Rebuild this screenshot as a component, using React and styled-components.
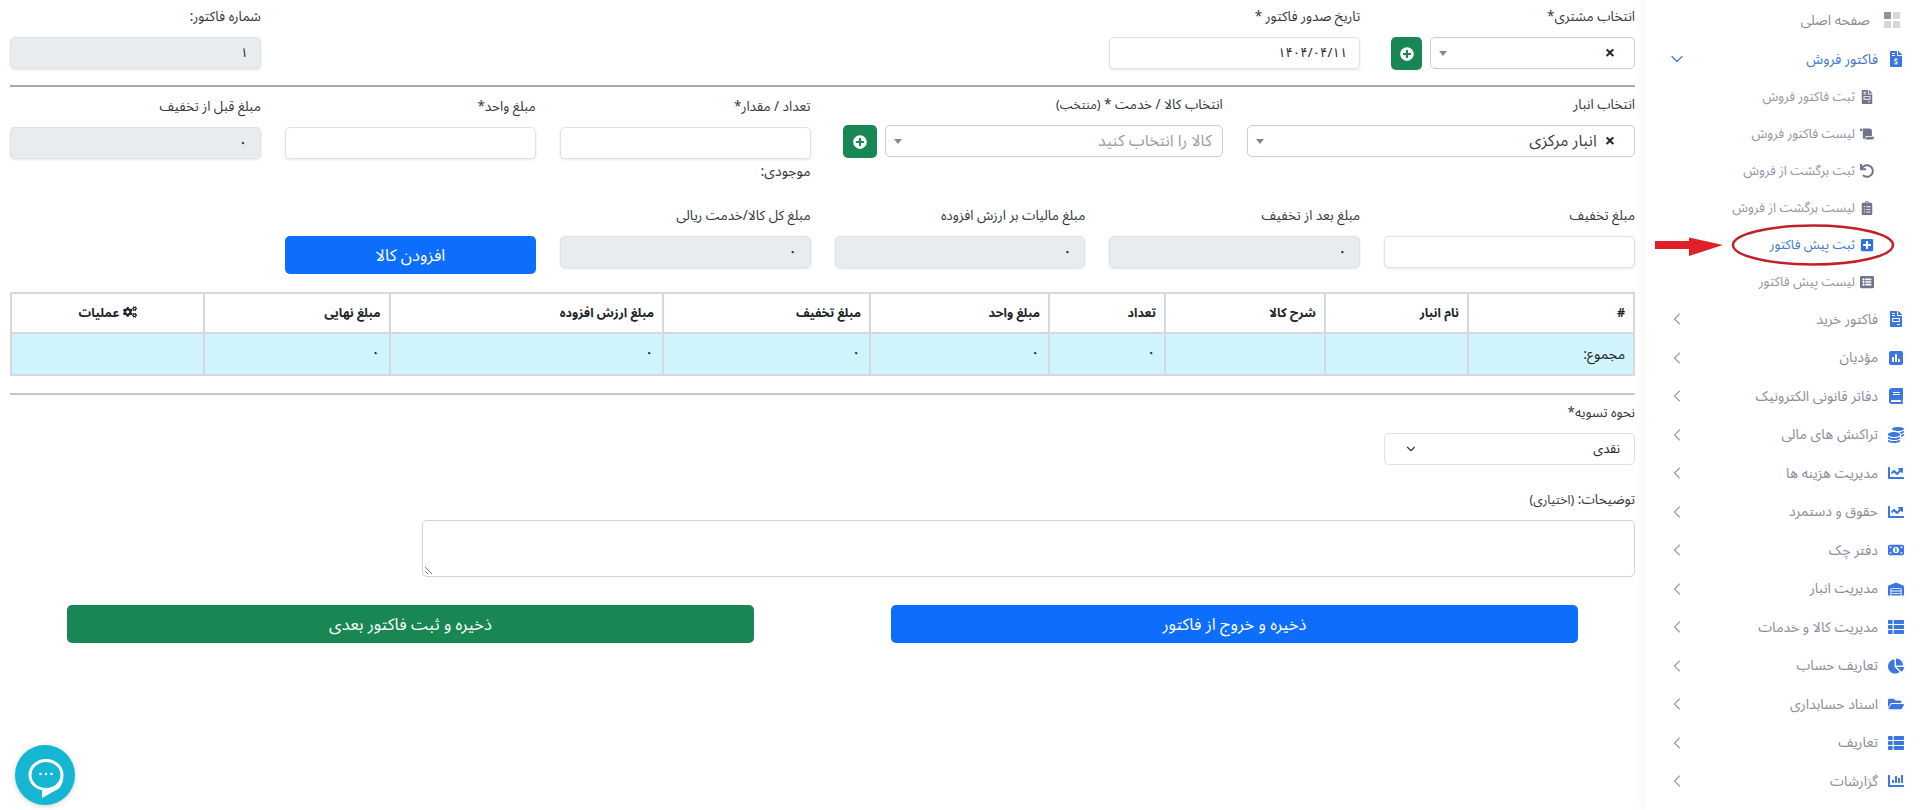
import React from "react";
import styled, { createGlobalStyle } from "styled-components";
import {
  FaFileInvoiceDollar, FaFileInvoice, FaScroll, FaUndo, FaClipboardList, FaPlusSquare, FaListAlt,
  FaBook, FaCoins, FaChartLine, FaChartBar, FaWarehouse, FaThList, FaChartPie, FaFolderOpen, FaPlusCircle, FaCogs,
} from "react-icons/fa";
import { FaSquarePollVertical, FaMoneyBill1 } from "react-icons/fa6";
import { FiChevronDown, FiChevronLeft } from "react-icons/fi";

const FONT = `"Noto Sans Arabic", "Vazirmatn", "DejaVu Sans", sans-serif`;

const Global = createGlobalStyle`
  html, body { margin: 0; padding: 0; background: #fff; }
  body { font-family: ${FONT}; color: #212529; width: 1920px; height: 810px; overflow: hidden; }
  * { box-sizing: border-box; }
`;

const Page = styled.div`
  position: relative;
  display: flex;
  direction: rtl;
  width: 1920px;
  height: 810px;
  background: #fff;
`;

const Sidebar = styled.aside`
  flex: 0 0 275px;
  height: 810px;
  padding-top: 1px;
  background: #fff;
  box-shadow: 0 0 10px rgba(67, 89, 113, 0.1);
`;

const NavItem = styled.div`
  display: flex;
  align-items: center;
  height: ${(p) => (p.$home ? 39 : 38.5)}px;
  padding: 0 16px ${(p) => (p.$home ? 0.5 : 0)}px 0;
  font-size: 14px;
  color: ${(p) => (p.$active ? "#3f78c9" : "#8a8d9b")};
  svg.nav-icon { color: #3b76e1; font-size: 16px; margin-left: 10px; flex: none; }
`;

const HomeIcon = styled.svg`
  width: 16px;
  height: 16px;
  margin: 0 4px 0 14px;
  flex: none;
`;

const NavLabel = styled.span`
  flex: 1;
  white-space: nowrap;
`;

const Chevron = styled.span`
  display: flex;
  margin-left: 22px;
  font-size: 20px;
  color: ${(p) => (p.$active ? "#3f78c9" : "#9a9da9")};
  svg { stroke-width: 1.4; }
`;

const SubMenu = styled.div`
  display: flex;
  flex-direction: column;
  margin-top: -0.5px;
`;

const SubItem = styled.div`
  display: flex;
  align-items: center;
  height: 37px;
  padding-right: 46px;
  font-size: 13px;
  white-space: nowrap;
  color: ${(p) => (p.$active ? "#3f78c9" : "#9396a3")};
  svg { font-size: 14px; margin-left: 5px; flex: none; color: ${(p) => (p.$active ? "#2f6fe0" : "#71738a")}; }
`;

const Main = styled.main`
  flex: 1;
  min-width: 0;
  padding: 8px 10px 0;
`;

const Grid = styled.div`
  display: grid;
  grid-template-columns: repeat(12, 1fr);
  column-gap: 24px;
  margin-top: ${(p) => p.$top || 0}px;
`;

const Field = styled.div`
  grid-column: span ${(p) => p.$span || 2};
  padding-top: ${(p) => p.$shift || 0}px;
  min-width: 0;
`;

const Label = styled.label`
  display: block;
  height: 21px;
  line-height: 18px;
  margin-bottom: 8px;
  font-size: 13.5px;
  white-space: nowrap;
  color: #33373c;
  small { font-size: 12.5px; }
`;

const Input = styled.div`
  display: flex;
  align-items: center;
  height: 32px;
  padding: 0 12px;
  border: 1px solid #dee2e6;
  border-radius: 5px;
  font-size: 13px;
  color: #212529;
  background: ${(p) => (p.$disabled ? "#e9ecef" : "#fff")};
  box-shadow: 0 1px 3px rgba(0, 0, 0, 0.1);
`;

const Zero = styled.span`
  font-size: 17px;
  line-height: 1;
`;

const Stock = styled.div`
  margin-top: 2px;
  height: 21px;
  line-height: 21px;
  font-size: 14px;
  color: #33373c;
`;

const Combo = styled.div`
  display: flex;
  gap: 8px;
  padding-left: ${(p) => p.$pad}px;
`;

const Select2 = styled.div`
  flex: 1;
  display: flex;
  align-items: center;
  height: 32px;
  padding: 0 19px 0 8px;
  border: 1px solid #c9ced4;
  border-radius: 5px;
  background: #fff;
  font-size: 16px;
  color: #3d4046;
`;

const Clear = styled.span`
  font-size: 18px;
  font-weight: 700;
  line-height: 1;
  color: #222;
  margin-left: 8px;
`;

const Placeholder = styled.span`
  margin-right: -9px;
  font-size: 16px;
  color: #9b9ea3;
`;

const Caret = styled.span`
  margin-right: auto;
  width: 0;
  height: 0;
  border-left: 4px solid transparent;
  border-right: 4px solid transparent;
  border-top: 5px solid #888;
`;

const AddButton = styled.button`
  flex: 0 0 ${(p) => p.$w}px;
  height: 33px;
  padding: 0;
  display: flex;
  align-items: center;
  justify-content: center;
  border: 0;
  border-radius: 5px;
  background: #198754;
  color: #fff;
  font-size: 14px;
`;

const Divider = styled.hr`
  margin: ${(p) => p.$my || "15px 0 9px"};
  height: 2px;
  border: 0;
  background: ${(p) => p.$color || "#a9a9a9"};
`;

const PrimaryButton = styled.button`
  width: 100%;
  height: 38px;
  border: 0;
  border-radius: 5px;
  background: #0d6efd;
  color: #fff;
  font: 400 16.5px ${FONT};
`;

const Table = styled.table`
  width: 100%;
  margin-top: 18px;
  table-layout: fixed;
  border-collapse: collapse;
  border: 2px solid #d5d8de;
  font-size: 12.5px;
  th, td { border: 2px solid #d5d8de; padding: 0 8px; text-align: right; }
  th { height: 40px; background: #fff; font-weight: 700; color: #212529; }
  th:last-child { text-align: center; }
  td { height: 42px; background: #cff4fc; color: #212529; }
  svg { vertical-align: -2px; font-size: 14px; }
`;

const TotalLabel = styled.span`
  font-size: 14px;
`;

const NativeSelect = styled.div`
  display: flex;
  align-items: center;
  justify-content: space-between;
  height: 32px;
  padding: 0 14px 0 19px;
  border: 1px solid #dee2e6;
  border-radius: 5px;
  font-size: 13px;
  background: #fff;
  svg { font-size: 14px; color: #343a40; }
`;

const TextArea = styled.div`
  position: relative;
  height: 57px;
  border: 1px solid #ced4da;
  border-radius: 5px;
  background: #fff;
  svg { position: absolute; left: 1px; bottom: 1px; }
`;

const ButtonRow = styled.div`
  display: flex;
  gap: 137px;
  margin-top: 28px;
  padding: 0 57px;
`;

const ActionButton = styled.button`
  flex: 1;
  height: 38px;
  border: 0;
  border-radius: 5px;
  background: ${(p) => p.$bg};
  color: #fff;
  font: 400 16.5px ${FONT};
`;

const Chat = styled.div`
  position: absolute;
  left: 15px;
  top: 745px;
  width: 60px;
  height: 60px;
  border-radius: 50%;
  background: #14b6d2;
  box-shadow: 0 1px 5px rgba(0, 0, 0, 0.2);
`;

const ChatGlyph = styled.svg`
  display: block;
  width: 60px;
  height: 60px;
`;

const Annotation = styled.svg`
  position: absolute;
  left: 1650px;
  top: 220px;
  width: 250px;
  height: 50px;
`;

const home = (
  <HomeIcon viewBox="0 0 16 16" className="nav-home">
    <rect x="9" width="7" height="7" rx="1" fill="#d5d7dd" />
    <rect width="7" height="7" rx="1" fill="#8e90a8" />
    <rect y="9" width="7" height="7" rx="1" fill="#d5d7dd" />
    <rect x="9" y="9" width="7" height="7" rx="1" fill="#d5d7dd" />
  </HomeIcon>
);

const menus = [
  [FaFileInvoice, "فاکتور خرید"],
  [FaSquarePollVertical, "مؤدیان"],
  [FaBook, "دفاتر قانونی الکترونیک"],
  [FaCoins, "تراکنش های مالی"],
  [FaChartLine, "مدیریت هزینه ها"],
  [FaChartLine, "حقوق و دستمرد"],
  [FaMoneyBill1, "دفتر چک"],
  [FaWarehouse, "مدیریت انبار"],
  [FaThList, "مدیریت کالا و خدمات"],
  [FaChartPie, "تعاریف حساب"],
  [FaFolderOpen, "اسناد حسابداری"],
  [FaThList, "تعاریف"],
  [FaChartBar, "گزارشات"],
];

const subs = [
  [FaFileInvoice, "ثبت فاکتور فروش"],
  [FaScroll, "لیست فاکتور فروش"],
  [FaUndo, "ثبت برگشت از فروش"],
  [FaClipboardList, "لیست برگشت از فروش"],
  [FaPlusSquare, "ثبت پیش فاکتور", true],
  [FaListAlt, "لیست پیش فاکتور"],
];

const columns = [
  ["#", 166, "مجموع:"],
  ["نام انبار", 143, ""],
  ["شرح کالا", 160, ""],
  ["تعداد", 116, "۰"],
  ["مبلغ واحد", 179, "۰"],
  ["مبلغ تخفیف", 207, "۰"],
  ["مبلغ ارزش افزوده", 273.5, "۰"],
  ["مبلغ نهایی", 185.5, "۰"],
  ["عملیات", 193, ""],
];

export default function App() {
  return (
    <Page>
      <Global />
      <Sidebar>
        <NavItem $home>
          {home}
          <NavLabel>صفحه اصلی</NavLabel>
        </NavItem>
        <NavItem $active>
          <FaFileInvoiceDollar className="nav-icon" />
          <NavLabel>فاکتور فروش</NavLabel>
          <Chevron $active><FiChevronDown /></Chevron>
        </NavItem>
        <SubMenu>
          {subs.map(([Icon, text, active]) => (
            <SubItem key={text} $active={active}><Icon />{text}</SubItem>
          ))}
        </SubMenu>
        {menus.map(([Icon, text]) => (
          <NavItem key={text}>
            <Icon className="nav-icon" />
            <NavLabel>{text}</NavLabel>
            <Chevron><FiChevronLeft /></Chevron>
          </NavItem>
        ))}
      </Sidebar>

      <Main>
        <Grid>
          <Field>
            <Label>انتخاب مشتری*</Label>
            <Combo $pad={7}>
              <Select2><Clear>×</Clear><Caret /></Select2>
              <AddButton $w={31}><FaPlusCircle /></AddButton>
            </Combo>
          </Field>
          <Field>
            <Label>تاریخ صدور فاکتور *</Label>
            <Input>۱۴۰۴/۰۴/۱۱</Input>
          </Field>
          <Field $span={6} />
          <Field>
            <Label>شماره فاکتور:</Label>
            <Input $disabled>۱</Input>
          </Field>
        </Grid>
        <Divider />
        <Grid>
          <Field $span={3}>
            <Label>انتخاب انبار</Label>
            <Select2><Clear>×</Clear>انبار مرکزی<Caret /></Select2>
          </Field>
          <Field $span={3}>
            <Label>انتخاب کالا / خدمت * <small>(منتخب)</small></Label>
            <Combo $pad={8}>
              <Select2><Placeholder>کالا را انتخاب کنید</Placeholder><Caret /></Select2>
              <AddButton $w={34}><FaPlusCircle /></AddButton>
            </Combo>
          </Field>
          <Field $shift={2}>
            <Label>تعداد / مقدار*</Label>
            <Input />
            <Stock>موجودی:</Stock>
          </Field>
          <Field $shift={2}>
            <Label>مبلغ واحد*</Label>
            <Input />
          </Field>
          <Field $shift={2}>
            <Label>مبلغ قبل از تخفیف</Label>
            <Input $disabled><Zero>۰</Zero></Input>
          </Field>
        </Grid>
        <Grid $top={25}>
          <Field>
            <Label>مبلغ تخفیف</Label>
            <Input />
          </Field>
          <Field>
            <Label>مبلغ بعد از تخفیف</Label>
            <Input $disabled><Zero>۰</Zero></Input>
          </Field>
          <Field>
            <Label>مبلغ مالیات بر ارزش افزوده</Label>
            <Input $disabled><Zero>۰</Zero></Input>
          </Field>
          <Field>
            <Label>مبلغ کل کالا/خدمت ریالی</Label>
            <Input $disabled><Zero>۰</Zero></Input>
          </Field>
          <Field>
            <Label>&nbsp;</Label>
            <PrimaryButton>افزودن کالا</PrimaryButton>
          </Field>
        </Grid>
        <Table>
          <colgroup>
            {columns.map(([name, w]) => <col key={name} width={w} />)}
          </colgroup>
          <thead>
            <tr>
              {columns.map(([name]) => (
                <th key={name}>{name === "عملیات" && <FaCogs />} {name}</th>
              ))}
            </tr>
          </thead>
          <tbody>
            <tr>
              {columns.map(([name, , v]) => (
                <td key={name}>
                  {v === "مجموع:" ? <TotalLabel>{v}</TotalLabel> : v && <Zero>{v}</Zero>}
                </td>
              ))}
            </tr>
          </tbody>
        </Table>
        <Divider $my="17px 0 9px" $color="#c8c8c8" />
        <Grid>
          <Field>
            <Label>نحوه تسویه*</Label>
            <NativeSelect>نقدی<FiChevronDown /></NativeSelect>
          </Field>
        </Grid>
        <Grid $top={26}>
          <Field $span={9}>
            <Label>توضیحات: <small>(اختیاری)</small></Label>
            <TextArea>
              <svg width="9" height="9" viewBox="0 0 9 9"><path d="M1 8 8 1M5 8 8 5" stroke="#777" fill="none" transform="matrix(-1 0 0 1 9 0)" /></svg>
            </TextArea>
          </Field>
        </Grid>
        <ButtonRow>
          <ActionButton $bg="#0d6efd">ذخیره و خروج از فاکتور</ActionButton>
          <ActionButton $bg="#198754">ذخیره و ثبت فاکتور بعدی</ActionButton>
        </ButtonRow>
      </Main>

      <Chat>
        <ChatGlyph viewBox="0 0 60 60">
          <path d="M31 14c-9.700 0-17.500 7-17.500 16 0 7.600 5.600 13.500 13.500 15.300V53l17-9.500c3-3.200 4.500-8 4.500-13.500 0-9-7.800-16-17.500-16z" fill="#fff" />
          <ellipse cx="31" cy="30" rx="14.500" ry="13" fill="#14b6d2" />
          <circle cx="25.500" cy="29" r="1.300" fill="#fff" />
          <circle cx="31" cy="29" r="1.300" fill="#fff" />
          <circle cx="36.500" cy="29" r="1.300" fill="#fff" />
        </ChatGlyph>
      </Chat>

      <Annotation viewBox="0 0 250 50">
        <path d="M5 21H39V17.5L73 25 39 36V29H5z" fill="#e01f26" />
        <ellipse cx="163" cy="25" rx="80" ry="19.5" fill="none" stroke="#c1202a" strokeWidth="2.5" />
      </Annotation>
    </Page>
  );
}
